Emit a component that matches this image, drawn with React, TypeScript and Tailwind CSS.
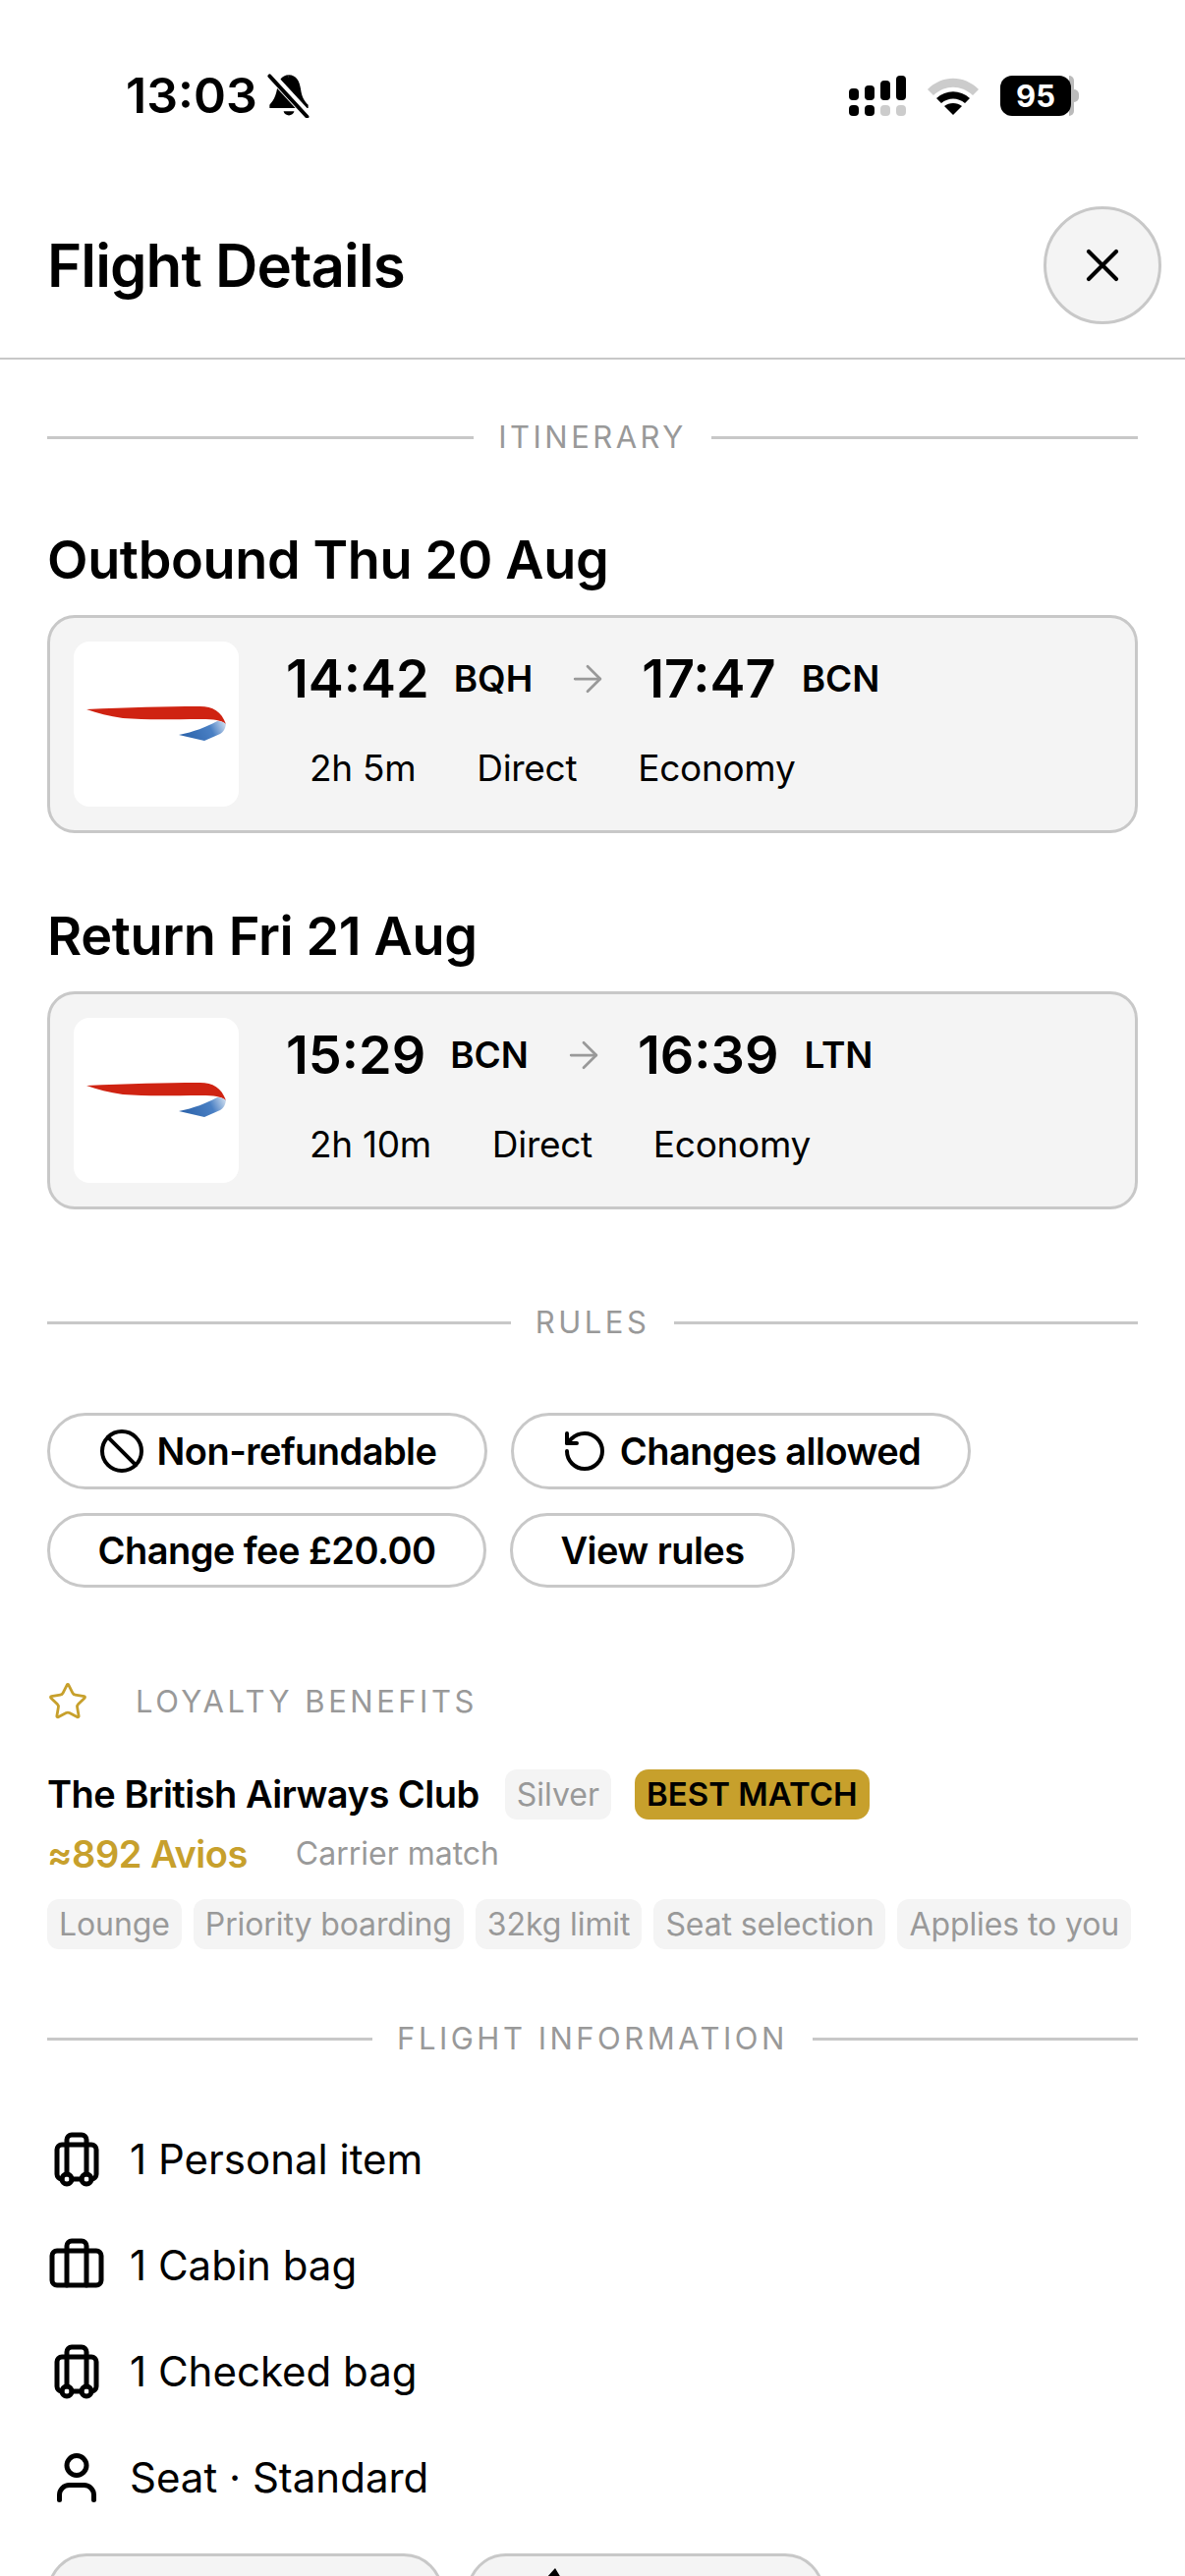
import React from 'react';
import { ArrowRight, Ban, Briefcase, Luggage, RotateCcw, Star, User, X } from 'lucide-react';

const SectionDivider = ({ label, className }: { label: string; className: string }) => (
  <div className={`flex items-center gap-[25px] h-[40px] ${className}`}>
    <div className="flex-1 h-[3px] bg-[#c8c8c8]" />
    <span className="text-[31px] leading-[40px] tracking-[3.5px] text-[#999999]">{label}</span>
    <div className="flex-1 h-[3px] bg-[#c8c8c8]" />
  </div>
);

const AirlineLogo = ({ id }: { id: string }) => (
  <div className="w-[168px] h-[168px] shrink-0 rounded-[16px] bg-white">
    <svg width="168" height="168" viewBox="0 0 168 168">
      <defs>
        <linearGradient id={id} x1="115" y1="100" x2="155" y2="80" gradientUnits="userSpaceOnUse">
          <stop offset="0" stopColor="#2f66ad" />
          <stop offset="0.6" stopColor="#4a80c4" />
          <stop offset="1" stopColor="#dbe6f3" />
        </linearGradient>
      </defs>
      <path d="M13 69 C55 67 95 66 125 66 C140 65 150 70 155 84 C150 80 143 79 130 79 C100 79 75 80 50 78 C36 76 24 73 13 69 Z" fill="#cf2312" />
      <path d="M107 95 C122 92 135 87 146 81 C150 81 153 82 155 84 C154 90 152 92 149 94 L133 101 Z" fill={`url(#${id})`} />
    </svg>
  </div>
);

type LegProps = {
  dep: string;
  depCode: string;
  arr: string;
  arrCode: string;
  duration: string;
  logoId: string;
};

const FlightCard = ({ dep, depCode, arr, arrCode, duration, logoId }: LegProps) => (
  <div className="flex h-[222px] rounded-[28px] border-[3px] border-[#c8c8c8] bg-[#f4f4f4] p-[24px] mt-[24px]">
    <AirlineLogo id={logoId} />
    <div className="ml-[48px] mt-[10px] flex flex-col">
      <div className="flex items-center h-[56px]">
        <span className="text-[54px] leading-[56px] font-semibold">{dep}</span>
        <span className="ml-[25px] text-[37px] font-semibold">{depCode}</span>
        <ArrowRight className="ml-[34px] text-[#999999]" size={44} strokeWidth={1.5} />
        <span className="ml-[33px] text-[54px] leading-[56px] font-semibold">{arr}</span>
        <span className="ml-[26px] text-[37px] font-semibold">{arrCode}</span>
      </div>
      <div className="flex gap-[62px] mt-[39px] ml-[24px] text-[37px] leading-[48px] tracking-[-0.3px]">
        <span>{duration}</span>
        <span>Direct</span>
        <span>Economy</span>
      </div>
    </div>
  </div>
);

const Pill = ({ children, className }: { children: React.ReactNode; className: string }) => (
  <div className={`flex items-center justify-center gap-[12px] rounded-full border-[3px] border-[#c8c8c8] bg-white text-[38px] font-semibold tracking-[-0.55px] ${className}`}>
    {children}
  </div>
);

const Tag = ({ label }: { label: string }) => (
  <span className="h-[51px] whitespace-nowrap rounded-[12px] bg-[#f4f4f4] px-[12px] text-[32px] leading-[51px] tracking-[-0.1px] text-[#999999]">{label}</span>
);

const InfoRow = ({ icon, label }: { icon: React.ReactNode; label: string }) => (
  <div className="flex items-center h-[60px] gap-[24px]">
    <div className="w-[60px] flex justify-center">{icon}</div>
    <span className="text-[42px] leading-[60px]">{label}</span>
  </div>
);

const StatusIcons = () => (
  <div className="flex items-center">
    <div className="flex flex-col gap-[5px] mr-[22px]">
      <div className="flex items-end gap-[6px]">
        <div className="w-[10px] h-[12px] rounded-[4px] bg-black" />
        <div className="w-[10px] h-[15px] rounded-[4px] bg-black" />
        <div className="w-[10px] h-[20px] rounded-[4px] bg-black" />
        <div className="w-[10px] h-[25px] rounded-[4px] bg-black" />
      </div>
      <div className="flex gap-[6px]">
        <div className="w-[10px] h-[11px] rounded-[4px] bg-black" />
        <div className="w-[10px] h-[11px] rounded-[4px] bg-black" />
        <div className="w-[10px] h-[11px] rounded-[4px] bg-[#cccccc]" />
        <div className="w-[10px] h-[11px] rounded-[4px] bg-[#cccccc]" />
      </div>
    </div>
    <svg width="52" height="38" viewBox="0 0 52 38" className="mr-[22px]">
      <path d="M0 12 C15 -3 37 -3 52 12 L46 18 C34 7 18 7 6 18 Z" fill="#cccccc" />
      <path d="M9 21 C19 12 33 12 43 21 L38 26 C31 20 21 20 14 26 Z" fill="#000000" />
      <path d="M17 29 C22 25 30 25 35 29 L26 38 Z" fill="#000000" />
    </svg>
    <div className="relative w-[75px] h-[41px]">
      <div className="absolute left-[70px] top-0 w-[5px] h-[41px] rounded-r-[10px] bg-[#bbbbbb]" />
      <div className="absolute left-[75px] top-[14px] w-[5px] h-[13px] rounded-r-[5px] bg-[#bbbbbb]" />
      <div className="absolute inset-y-0 left-0 w-[72px] rounded-[12px] bg-black text-center text-[31px] leading-[41px] font-bold text-white">95</div>
    </div>
  </div>
);

export default function App() {
  return (
    <div className="w-[1206px] h-[2622px] overflow-hidden bg-white text-black font-['Inter',sans-serif]">
      <div className="flex justify-between items-start h-[210px] pt-[72px] pl-[128px] pr-[113px]">
        <div className="flex items-center gap-[8px]">
          <span className="text-[50px] leading-[50px] font-semibold">13:03</span>
          <svg width="48" height="46" viewBox="0 0 44 42">
            <path d="M22 2 C29 2 32 8 33 15 C34 22 36 26 40 30 L40 33 L12 33 Z" fill="#000000" />
            <path d="M22 2 C15 2 12 8 11 15 C10 20 9 23 7 26 L4 30 L4 33 L16 33 Z" fill="#000000" />
            <path d="M17 36 L27 36 C26 41 18 41 17 36 Z" fill="#000000" />
            <path d="M5 2 L40 40" stroke="#ffffff" strokeWidth="8" />
            <path d="M4 3 L39 41" stroke="#000000" strokeWidth="3.5" strokeLinecap="round" />
          </svg>
        </div>
        <div className="pt-[5px]"><StatusIcons /></div>
      </div>

      <div className="flex justify-between items-center h-[156px] pl-[48px] pr-[24px] pb-[34px] border-b-[2px] border-[#c8c8c8]">
        <h1 className="text-[60px] leading-[72px] font-semibold tracking-[-0.9px]">Flight Details</h1>
        <div className="flex items-center justify-center w-[120px] h-[120px] rounded-full border-[3px] border-[#c8c8c8] bg-[#f4f4f4]">
          <X size={56} strokeWidth={1.75} />
        </div>
      </div>

      <div className="px-[48px]">
        <SectionDivider label="ITINERARY" className="mt-[59px]" />

        <h2 className="mt-[73px] text-[54px] leading-[64px] font-semibold tracking-[-0.35px]">Outbound Thu 20 Aug</h2>
        <FlightCard dep="14:42" depCode="BQH" arr="17:47" arrCode="BCN" duration="2h 5m" logoId="ba-out" />

        <h2 className="mt-[73px] text-[54px] leading-[64px] font-semibold tracking-[-0.35px]">Return Fri 21 Aug</h2>
        <FlightCard dep="15:29" depCode="BCN" arr="16:39" arrCode="LTN" duration="2h 10m" logoId="ba-ret" />

        <SectionDivider label="RULES" className="mt-[95px]" />

        <div className="mt-[72px] flex gap-[24px]">
          <Pill className="w-[448px] h-[78px]">
            <Ban size={48} strokeWidth={2} />
            <span>Non-refundable</span>
          </Pill>
          <Pill className="w-[468px] h-[78px]">
            <RotateCcw size={48} strokeWidth={2} />
            <span>Changes allowed</span>
          </Pill>
        </div>
        <div className="mt-[24px] flex gap-[24px]">
          <Pill className="w-[447px] h-[76px]">Change fee £20.00</Pill>
          <Pill className="w-[290px] h-[76px]">View rules</Pill>
        </div>

        <div className="mt-[96px] flex items-center h-[40px]">
          <Star className="text-[#c7a02c]" size={42} strokeWidth={1.6} />
          <span className="ml-[48px] text-[31px] leading-[40px] tracking-[3.5px] text-[#999999]">LOYALTY BENEFITS</span>
        </div>

        <div className="mt-[49px] flex items-center h-[51px]">
          <span className="text-[38px] font-semibold tracking-[-0.5px]">The British Airways Club</span>
          <span className="ml-[26px] h-[51px] rounded-[12px] bg-[#f4f4f4] px-[12px] text-[32px] leading-[51px] text-[#999999]">Silver</span>
          <span className="ml-[24px] h-[51px] rounded-[14px] bg-[#c7a02c] px-[12px] text-[33px] leading-[51px] font-semibold">BEST MATCH</span>
        </div>
        <div className="mt-[11px] flex items-center h-[48px]">
          <span className="text-[38px] font-semibold text-[#c7a02c] tracking-[-0.5px]">≈892 Avios</span>
          <span className="ml-[49px] text-[32px] text-[#999999]">Carrier match</span>
        </div>
        <div className="mt-[22px] flex gap-[12px]">
          <Tag label="Lounge" />
          <Tag label="Priority boarding" />
          <Tag label="32kg limit" />
          <Tag label="Seat selection" />
          <Tag label="Applies to you" />
        </div>

        <SectionDivider label="FLIGHT INFORMATION" className="mt-[71px]" />

        <div className="mt-[73px] flex flex-col gap-[48px]">
          <InfoRow icon={<Luggage size={60} strokeWidth={2} />} label="1 Personal item" />
          <InfoRow icon={<Briefcase size={60} strokeWidth={2} />} label="1 Cabin bag" />
          <InfoRow icon={<Luggage size={60} strokeWidth={2} />} label="1 Checked bag" />
          <InfoRow icon={<User size={60} strokeWidth={2} />} label="Seat · Standard" />
        </div>

        <div className="mt-[47px] flex gap-[24px]">
          <div className="w-[403px] h-[80px] rounded-[40px] border-[3px] border-[#c8c8c8] bg-[#f4f4f4]" />
          <div className="w-[364px] h-[80px] rounded-[40px] border-[3px] border-[#c8c8c8] bg-[#f4f4f4] pl-[78px] pt-[12px]">
            <svg width="18" height="10" viewBox="0 0 18 10">
              <path d="M0 10 L9 0 L15 10 Z" fill="#000000" />
            </svg>
          </div>
        </div>
      </div>
    </div>
  );
}
